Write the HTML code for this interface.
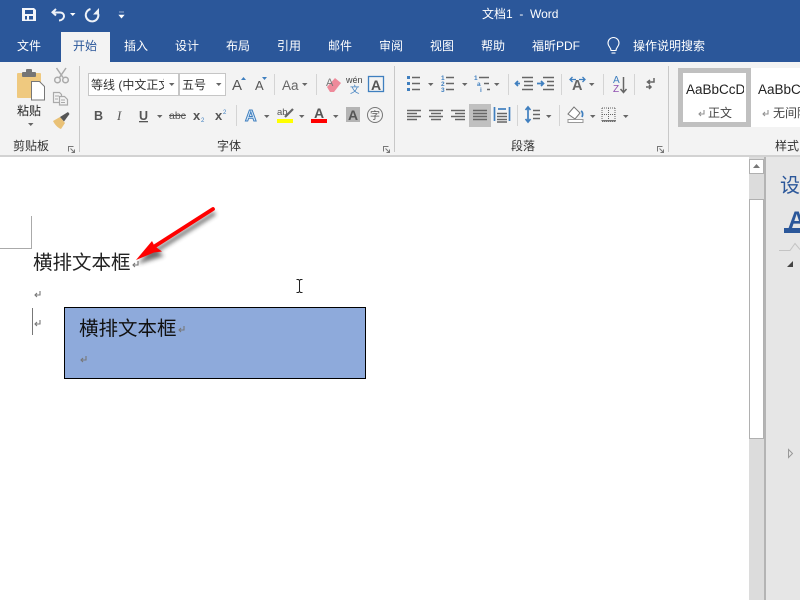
<!DOCTYPE html>
<html><head><meta charset="utf-8"><style>
html,body{margin:0;padding:0;width:800px;height:600px;overflow:hidden;background:#fff}
svg{display:block;font-family:"Liberation Sans","Noto Sans CJK SC",sans-serif}
.t{fill:#fff;font-size:12px}
.ic{fill:none;stroke:#666;stroke-width:1.500}
.bl{fill:none;stroke:#3f7fbf;stroke-width:1.700}
</style></head><body>
<svg width="800" height="600" viewBox="0 0 800 600" xmlns="http://www.w3.org/2000/svg">
<defs>
<path id="cr" d="M0 0h5.500l-2.750 3z" fill="#666"/>
<g id="pm" fill="none" stroke="#777" stroke-width="1.100"><path d="M6 0v4H1M3 2L1 4l2 2"/></g>
<g id="launch" fill="none" stroke="#777" stroke-width="1"><path d="M5.500 .5H.5v5"/><path d="M2.500 2.500l4 4M6.500 3.500v3h-3"/></g>
<clipPath id="c1"><rect x="686" y="70" width="58" height="40"/></clipPath>
<clipPath id="c2"><rect x="90" y="74" width="74" height="20"/></clipPath>
<filter id="sh" x="-30%" y="-30%" width="160%" height="160%"><feGaussianBlur stdDeviation="2"/></filter>
</defs>

<!-- title / tab bar -->
<rect width="800" height="62" fill="#2b579a"/>
<rect y="62" width="800" height="94" fill="#f3f3f3"/>
<rect y="155" width="800" height="2" fill="#d2d2d2"/>
<rect x="61" y="32" width="49" height="30" fill="#f3f3f3"/>

<!-- QAT -->
<path fill-rule="evenodd" fill="#fff" d="M22 8h12l2 2v11H22zM25 10v4h8v-4zM25 16v3.500h2V16zM29 16v3.500h4V16z" opacity=".95"/>
<g fill="none" stroke="#eef2f8" stroke-width="2">
<path d="M56 9l-3.500 3.200 3.500 3.300"/><path d="M53 12.500h7c5.500 0 5.500 7.500-1 8"/>
<path d="M90.500 9A6.300 6.300 0 1 0 98.300 14"/>
</g>
<path d="M93 14.500l6-6.500v6.500z" fill="#eef2f8"/>
<path d="M70 13h5.500l-2.750 3z" fill="#fff"/>
<path d="M119 12h5M119 15h5l-2.500 3z" fill="#fff" stroke="#fff" stroke-width=".6"/>
<text x="482" y="18" class="t">文档1&#160;&#160;-&#160;&#160;Word</text>

<!-- tabs -->
<text x="17" y="50" class="t">文件</text>
<text x="73" y="50" style="font-size:12px" fill="#2b579a">开始</text>
<text x="124" y="50" class="t">插入</text>
<text x="175" y="50" class="t">设计</text>
<text x="226" y="50" class="t">布局</text>
<text x="277" y="50" class="t">引用</text>
<text x="328" y="50" class="t">邮件</text>
<text x="379" y="50" class="t">审阅</text>
<text x="430" y="50" class="t">视图</text>
<text x="481" y="50" class="t">帮助</text>
<text x="532" y="50" class="t">福昕PDF</text>
<g fill="none" stroke="#fff" stroke-width="1.100"><path d="M611 50.500c0-3-3-4-3-7.500a5.500 5.500 0 0 1 11 0c0 3.500-3 4.500-3 7.500z"/><path d="M611.500 53h4"/></g>
<text x="633" y="50" class="t">操作说明搜索</text>

<!-- group separators -->
<g fill="#c8c8c8">
<rect x="79" y="66" width="1" height="86"/>
<rect x="394" y="66" width="1" height="86"/>
<rect x="668" y="66" width="1" height="86"/>
</g>
<!-- small separators -->
<g fill="#d4d4d4">
<rect x="274" y="74" width="1" height="21"/><rect x="316" y="74" width="1" height="21"/>
<rect x="508" y="74" width="1" height="21"/><rect x="561" y="74" width="1" height="21"/>
<rect x="603" y="74" width="1" height="21"/><rect x="634" y="74" width="1" height="21"/>
<rect x="236" y="105" width="1" height="21"/><rect x="517" y="105" width="1" height="21"/><rect x="559" y="105" width="1" height="21"/>
</g>

<!-- paste -->
<rect x="17" y="73" width="24" height="25" rx="1" fill="#efc97f"/>
<rect x="22" y="72" width="14" height="5" rx="1" fill="#757575"/><rect x="26" y="69" width="6" height="4" rx="1" fill="#757575"/>
<path d="M31.500 81.500h8l5 5v13.500h-13z" fill="#fff" stroke="#777"/>
<text x="17" y="115" style="font-size:12px" fill="#222">粘贴</text>
<use href="#cr" x="28" y="123"/>
<g fill="none" stroke="#aaa" stroke-width="1.500">
<path d="M56.500 68l6.500 9.500M66 68l-6.500 9.500"/><circle cx="57.500" cy="80" r="2.800"/><circle cx="65.500" cy="80" r="2.800"/>
<path d="M53.500 92.500h6l2 2v8h-8z" stroke-width="1.200"/><path d="M59.500 96.500h5l3 3v5.500h-8z" fill="#f3f3f3" stroke-width="1.200"/>
<path d="M55 96h4M55 99h3M61 100h4M61 102.500h4" stroke-width=".9"/>
</g>
<path d="M53 121l7-4 5 6-4 6c-3-1-6-4-8-8z" fill="#e9c176"/><path d="M60 117l8-5 1.500 2-5.500 7.500z" fill="#555"/>
<text x="13" y="150" style="font-size:12px" fill="#333">剪贴板</text>
<use href="#launch" x="68" y="146"/>

<!-- font boxes -->
<rect x="88.500" y="73.500" width="137" height="22" fill="#fff" stroke="#c6c6c6"/>
<rect x="178" y="74" width="2" height="21" fill="#c6c6c6"/>
<text x="91" y="89" style="font-size:12px" fill="#333" clip-path="url(#c2)">等线 (中文正文)</text>
<use href="#cr" x="169" y="83"/>
<text x="182" y="89" style="font-size:12px" fill="#333">五号</text>
<use href="#cr" x="216" y="83"/>
<text x="232" y="90" style="font-size:15px" fill="#555">A</text><path d="M241 80h5l-2.500-3z" fill="#3f7fbf"/>
<text x="255" y="90" style="font-size:13px" fill="#555">A</text><path d="M262 77h5l-2.500 3z" fill="#3f7fbf"/>
<text x="282" y="90" style="font-size:13.500px" fill="#666">Aa</text><use href="#cr" x="302" y="83"/>

<!-- eraser / wen / A box -->
<path d="M327 87l8-9 6 5-7 9h-4z" fill="#ee8a9a"/><text x="326" y="86" style="font-size:11px" fill="#777">A</text>
<text x="346" y="83" style="font-size:9px" fill="#444">wén</text><text x="350" y="93" style="font-size:9.500px" fill="#3f7fbf">文</text>
<rect x="368.500" y="76.500" width="15" height="15" fill="none" stroke="#3f7fbf" stroke-width="1.300"/>
<text x="371" y="90" style="font-size:14px;font-weight:bold" fill="#555">A</text>

<!-- font row 2 -->
<text x="94" y="120" style="font-size:12.500px;font-weight:bold" fill="#555">B</text>
<text x="117" y="120" style="font-size:13px;font-style:italic;font-family:'Liberation Serif',serif" fill="#555">I</text>
<text x="139" y="120" style="font-size:12.500px;font-weight:bold" fill="#555">U</text><rect x="139" y="121" width="9" height="1.300" fill="#555"/>
<use href="#cr" x="157" y="115"/>
<text x="169" y="119" style="font-size:10.500px" fill="#555">abc</text><rect x="169" y="115" width="17" height="1" fill="#555"/>
<text x="193" y="120" style="font-size:13px;font-weight:bold" fill="#555">x</text><text x="201" y="122" style="font-size:6px" fill="#3f7fbf">2</text>
<text x="215" y="120" style="font-size:13px;font-weight:bold" fill="#555">x</text><text x="223" y="114" style="font-size:6px" fill="#3f7fbf">2</text>
<text x="245" y="121" style="font-size:16px;font-weight:bold" fill="#dcebf8" stroke="#3f7fbf" stroke-width="1">A</text>
<use href="#cr" x="264" y="115"/>
<text x="277" y="115" style="font-size:9.500px" fill="#555">ab</text><path d="M285 117l8-8" stroke="#666" stroke-width="2.200"/>
<rect x="277" y="119" width="16" height="4" fill="#ffff00"/><use href="#cr" x="299" y="115"/>
<text x="314" y="118" style="font-size:14px;font-weight:bold" fill="#555">A</text><rect x="311" y="119" width="16" height="4" fill="#f00"/><use href="#cr" x="333" y="115"/>
<rect x="346" y="107" width="14" height="15" fill="#b4b4b4"/><text x="348" y="120" style="font-size:14px;font-weight:bold" fill="#555">A</text>
<circle cx="375" cy="115" r="7.500" fill="none" stroke="#777"/><text x="370" y="119" style="font-size:10px" fill="#555">字</text>
<text x="217" y="150" style="font-size:12px" fill="#333">字体</text>
<use href="#launch" x="383" y="146"/>

<!-- paragraph row 1 -->
<g fill="#3f7fbf"><rect x="407" y="76" width="3" height="3"/><rect x="407" y="82" width="3" height="3"/><rect x="407" y="88" width="3" height="3"/></g>
<path d="M412 77.500h8M412 83.500h8M412 89.500h8" class="ic"/><use href="#cr" x="428" y="83"/>
<g style="font-size:6.500px;font-weight:bold" fill="#3f7fbf"><text x="441" y="80">1</text><text x="441" y="86">2</text><text x="441" y="92">3</text></g>
<path d="M446 77.500h8M446 83.500h8M446 89.500h8" class="ic"/><use href="#cr" x="462" y="83"/>
<g style="font-size:6.500px;font-weight:bold" fill="#3f7fbf"><text x="474" y="80">1</text><text x="477" y="86">a</text><text x="480" y="92">i</text></g>
<path d="M479 77.500h10M484 83.500h5M487 89.500h3" class="ic"/><use href="#cr" x="494" y="83"/>
<path d="M522 77.500h11M524 81.500h9M524 85.500h9M522 89.500h11" class="ic"/><path d="M520 83.500h-4m2-2.500l-2.500 2.500 2.500 2.500" class="bl"/>
<path d="M536 77.500h11M540 81.500h7M540 85.500h7M536 89.500h11" class="ic" transform="translate(7 0)"/><path d="M537 83.500h6m-2-2.500l2.500 2.500-2.500 2.500" class="bl"/>
<text x="572" y="90" style="font-size:14.500px;font-weight:bold" fill="#666">A</text><path d="M576 79.500h-6m2.500-2.500l-2.500 2.500 2.500 2.500M579 79.500h6m-2.500-2.500l2.500 2.500-2.500 2.500" class="bl" style="stroke-width:1.300"/>
<use href="#cr" x="589" y="83"/>
<text x="613" y="83" style="font-size:10px" fill="#3f7fbf">A</text><text x="613" y="92" style="font-size:10px" fill="#8e4fb0">Z</text>
<path d="M623.500 77v15m-3-3l3 3.500 3-3.500" class="ic"/>
<path d="M654 78v4h-6m2-2l-2.500 2 2.500 2M646 87h5m-2-2l2 2-2 2" class="ic"/>

<!-- paragraph row 2 -->
<path d="M407 110.500h14M407 113.500h10M407 116.500h14M407 119.500h10" class="ic"/>
<path d="M429 110.500h14M431 113.500h10M429 116.500h14M431 119.500h10" class="ic"/>
<path d="M451 110.500h14M455 113.500h10M451 116.500h14M455 119.500h10" class="ic"/>
<rect x="469" y="104" width="22" height="23" fill="#c0c0c0"/>
<path d="M473 110.500h14M473 113.500h14M473 116.500h14M473 119.500h14" class="ic"/>
<path d="M494.500 107v14M509.500 107v14" class="bl"/><path d="M498 109h8" class="bl"/>
<path d="M497 113.500h10M497 116.500h10M497 119.500h10M497 122h10" class="ic"/>
<path d="M528 107v15M525.500 110l2.500-3 2.500 3M525.500 119l2.500 3 2.500-3" class="bl"/>
<path d="M533 110.500h7M533 114.500h7M533 118.500h7" class="ic"/><use href="#cr" x="546" y="115"/>
<path d="M568 114l6-7 6 6-5 6z" fill="#fff" stroke="#777"/><path d="M581 111c2 1 2 4 1 6" class="bl"/>
<rect x="568" y="119.500" width="15" height="3" fill="#fff" stroke="#999"/>
<use href="#cr" x="590" y="115"/>
<path d="M602 108h13M602 121.500h13M602 108v13M608.500 108v13M615 108v13M602 114.500h13" fill="none" stroke="#666" stroke-dasharray="1 1"/>
<rect x="602" y="120" width="14" height="1.500" fill="#777"/>
<use href="#cr" x="623" y="115"/>
<text x="511" y="150" style="font-size:12px" fill="#333">段落</text>
<use href="#launch" x="657" y="146"/>

<!-- styles -->
<rect x="678" y="68" width="122" height="59" fill="#fff"/>
<rect x="680.500" y="70.500" width="68" height="54" fill="none" stroke="#c0c0c0" stroke-width="5"/>
<text x="686" y="94" style="font-size:13.500px" fill="#222" clip-path="url(#c1)">AaBbCcDc</text>
<text x="758" y="94" style="font-size:13.500px" fill="#222">AaBbCc</text>
<use href="#pm" x="698" y="110" opacity=".8"/><text x="708" y="117" style="font-size:12px" fill="#444">正文</text>
<use href="#pm" x="762" y="110" opacity=".8"/><text x="773" y="117" style="font-size:12px" fill="#444">无间隔</text>
<text x="775" y="150" style="font-size:12px" fill="#333">样式</text>

<!-- document margin mark -->
<path d="M0 248.500h31.500V216" fill="none" stroke="#aaa"/>

<!-- document text -->
<text x="33" y="269" style="font-size:19.500px" fill="#222">横排文本框</text>
<use href="#pm" x="132" y="261"/>
<use href="#pm" x="34" y="291"/>
<rect x="32" y="308" width="1" height="27" fill="#777"/>
<use href="#pm" x="34" y="320"/>

<!-- textbox -->
<rect x="64.500" y="307.500" width="301" height="71" fill="#8eaadb" stroke="#000"/>
<text x="79" y="335" style="font-size:19.500px" fill="#111">横排文本框</text>
<use href="#pm" x="178" y="326"/>
<use href="#pm" x="80" y="356"/>

<!-- arrow -->
<g filter="url(#sh)" opacity=".7" transform="translate(2 4)">
<path d="M213 209L155 246" stroke="#333" stroke-width="4"/><path d="M136 260l16-19 2 5 8 6z" fill="#333"/>
</g>
<path d="M213 209L152 248" stroke="#f00" stroke-width="3.800" stroke-linecap="round"/>
<path d="M136 260l16-19 2.500 5 7.500 5.500-8 1z" fill="#f00"/>

<!-- I-beam -->
<path d="M296.500 279.500h2l1 1 1-1h2M299.500 280v12M296.500 292.500h2l1-1 1 1h2" fill="none" stroke="#222"/>

<!-- scrollbar -->
<rect x="749" y="157" width="17" height="443" fill="#dcdcdc"/>
<rect x="749.500" y="159.500" width="14" height="14" fill="#fff" stroke="#b0b0b0"/>
<path d="M753 168h7l-3.500-4z" fill="#777"/>
<rect x="749.500" y="199.500" width="14" height="239" fill="#fff" stroke="#b0b0b0"/>
<rect x="764" y="157" width="2" height="443" fill="#b4b4b4"/>

<!-- right pane -->
<rect x="766" y="157" width="34" height="443" fill="#e6e6e6"/>
<text x="780" y="192" style="font-size:20px" fill="#2b579a">设</text>
<text x="788" y="228" style="font-size:24px;font-weight:bold" fill="#2b579a">A</text>
<rect x="784" y="228" width="16" height="5" fill="#2b579a"/>
<path d="M779 250.500h11l5-7 5 6" fill="none" stroke="#c4c4c4"/>
<path d="M787 267h6v-6z" fill="#444"/>
<path d="M788.500 449.500v8l4-4z" fill="none" stroke="#999"/>
</svg>
</body></html>
